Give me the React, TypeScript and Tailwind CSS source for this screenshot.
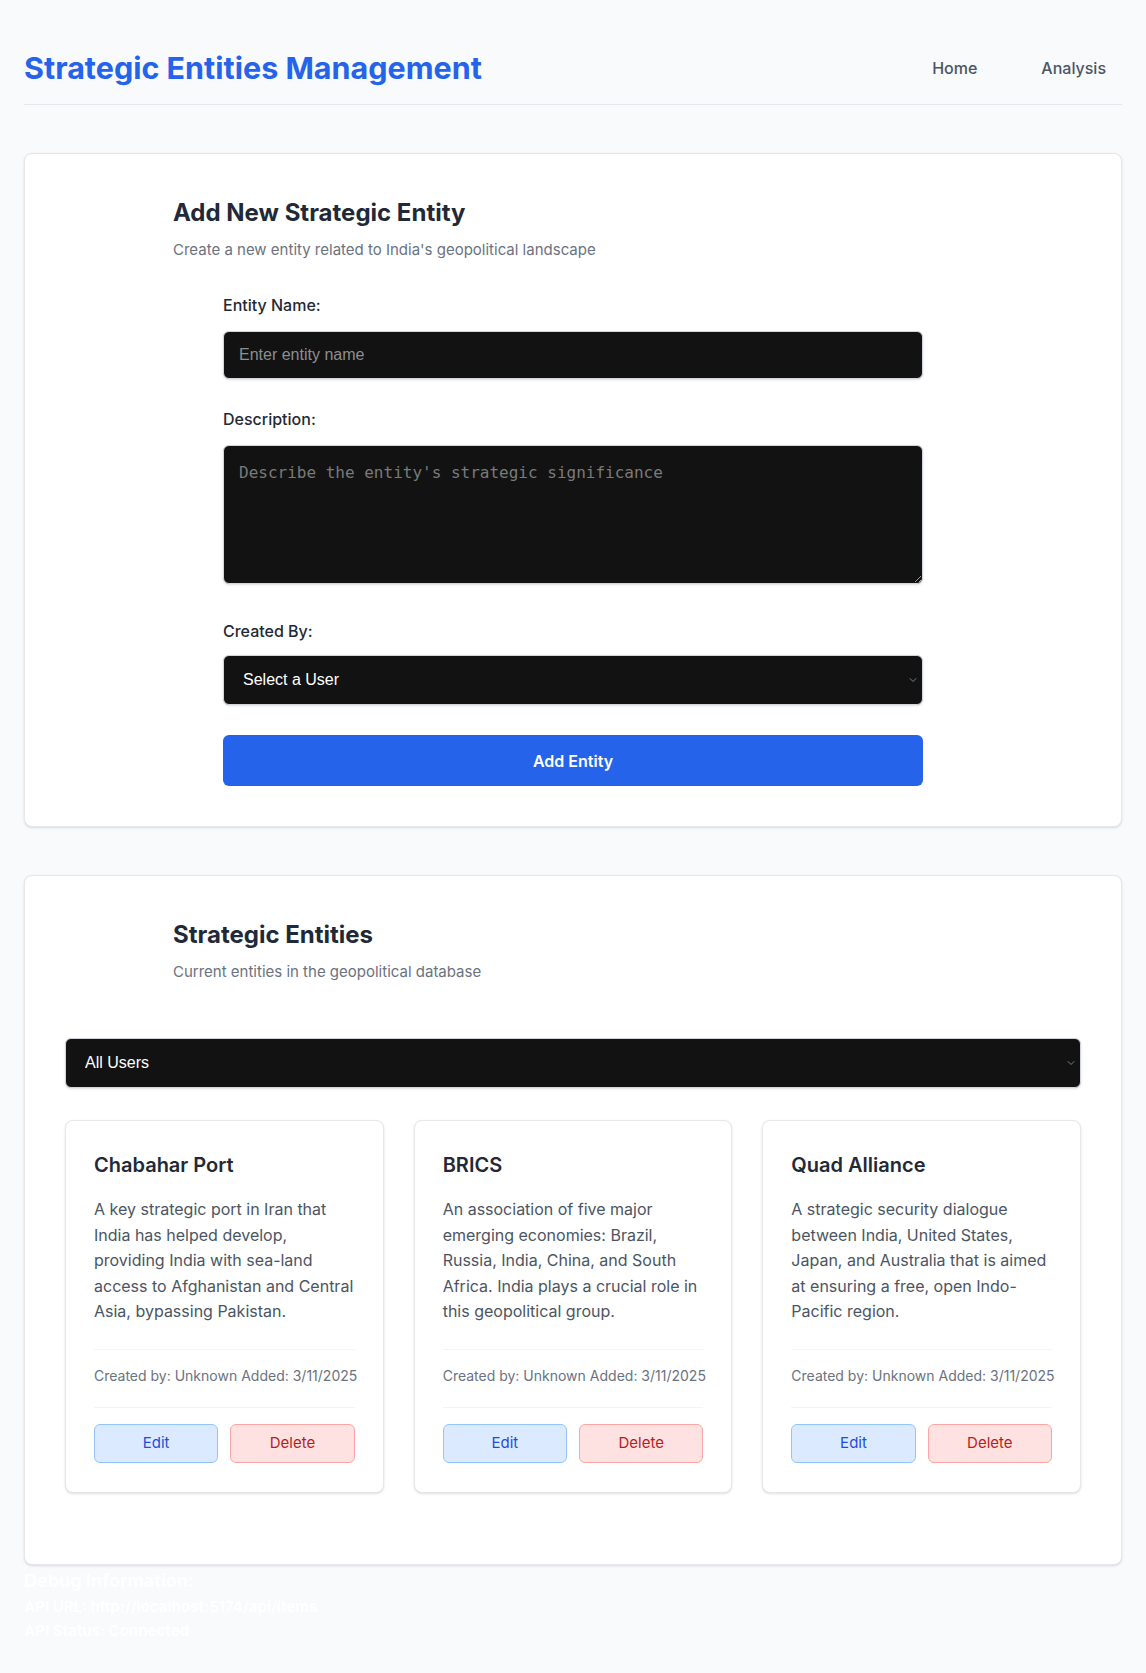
import { ChevronDown } from "lucide-react";

const entities = [
  {
    name: "Chabahar Port",
    desc: "A key strategic port in Iran that India has helped develop, providing India with sea-land access to Afghanistan and Central Asia, bypassing Pakistan.",
  },
  {
    name: "BRICS",
    desc: "An association of five major emerging economies: Brazil, Russia, India, China, and South Africa. India plays a crucial role in this geopolitical group.",
  },
  {
    name: "Quad Alliance",
    desc: "A strategic security dialogue between India, United States, Japan, and Australia that is aimed at ensuring a free, open Indo-Pacific region.",
  },
];

function SectionHead({ title, sub }: { title: string; sub: string }) {
  return (
    <div className="mx-auto mb-8 max-w-[800px]">
      <h2 className="text-2xl leading-[38px] font-bold text-[#1f2937]">{title}</h2>
      <p className="mt-[7px] text-[15px] leading-[22px] text-[#6b7280]">{sub}</p>
    </div>
  );
}

function DarkSelect({ label }: { label: string }) {
  return (
    <div className="relative">
      <select
        className="h-[50px] w-full appearance-none rounded-md border border-gray-300 bg-[#121212] pl-[19px] text-base text-white shadow-sm font-['Liberation_Sans',Arial,sans-serif]"
        defaultValue=""
      >
        <option value="">{label}</option>
      </select>
      <ChevronDown className="pointer-events-none absolute right-[4px] top-1/2 h-3 w-3 -translate-y-1/2 text-gray-400" strokeWidth={1.5} />
    </div>
  );
}

function EntityCard({ name, desc }: { name: string; desc: string }) {
  return (
    <div className="rounded-lg border border-gray-200 bg-white px-7 pt-7 pb-[29px] shadow-sm">
      <h3 className="mb-4 text-xl leading-8 font-semibold text-[#1f2937]">{name}</h3>
      <p className="mb-6 text-base leading-[25.6px] text-[#4b5563]">{desc}</p>
      <div className="flex justify-between gap-1 border-y border-gray-100 pt-4 pb-[21px] text-sm leading-5 whitespace-nowrap text-[#6b7280]">
        <span>Created by: Unknown</span>
        <span>Added: 3/11/2025</span>
      </div>
      <div className="mt-4 flex gap-3">
        <button className="h-[39px] flex-1 rounded-md border border-[#93c5fd] bg-[#dbeafe] text-[15px] text-[#1d4ed8]">Edit</button>
        <button className="h-[39px] flex-1 rounded-md border border-[#fca5a5] bg-[#fee2e2] text-[15px] text-[#b91c1c]">Delete</button>
      </div>
    </div>
  );
}

export default function App() {
  return (
    <div className="min-h-screen bg-[#f8fafc] px-6 pb-8 font-['Inter',sans-serif]">
      {/* HEADER */}
      <header className="flex items-center justify-between border-b border-gray-200 pt-[50px] pb-[18px]">
        <h1 className="text-[30.5px] leading-9 font-bold text-[#2563eb]">Strategic Entities Management</h1>
        <nav className="flex gap-8">
          <a className="px-4 text-base font-medium text-[#4b5563]">Home</a>
          <a className="px-4 text-base font-medium text-[#4b5563]">Analysis</a>
        </nav>
      </header>

      {/* ADD FORM */}
      <section className="mt-12 rounded-lg border border-gray-200 bg-white p-10 shadow-sm">
        <SectionHead title="Add New Strategic Entity" sub="Create a new entity related to India's geopolitical landscape" />
        <form className="mx-auto max-w-[700px]" onSubmit={(e) => e.preventDefault()}>
          <div className="mb-7">
            <label className="mb-3.5 block text-base leading-6 font-medium text-[#1f2937]">Entity Name:</label>
            <input
              className="block h-[48px] w-full rounded-md border border-gray-300 bg-[#121212] px-[15px] text-base text-white shadow-sm placeholder:text-[#8e8e8e] font-['Liberation_Sans',Arial,sans-serif]"
              placeholder="Enter entity name"
            />
          </div>
          <div className="mb-[35px]">
            <label className="mb-3.5 block text-base leading-6 font-medium text-[#1f2937]">Description:</label>
            <textarea
              className="block h-[139px] w-full rounded-md border border-gray-300 bg-[#121212] px-[15px] pt-[15px] pb-3 text-base text-white shadow-sm placeholder:text-[#7a7a7a] font-['DejaVu_Sans_Mono',monospace]"
              placeholder="Describe the entity's strategic significance"
            />
          </div>
          <div className="mb-[30px]">
            <label className="mb-3 block text-base leading-6 font-medium text-[#1f2937]">Created By:</label>
            <DarkSelect label="Select a User" />
          </div>
          <button className="h-[51px] w-full rounded-md bg-[#2563eb] text-base font-semibold text-white">Add Entity</button>
        </form>
      </section>

      {/* LIST */}
      <section className="mt-12 rounded-lg border border-gray-200 bg-white p-10 shadow-sm">
        <SectionHead title="Strategic Entities" sub="Current entities in the geopolitical database" />
        <div className="mt-[55px]">
          <DarkSelect label="All Users" />
        </div>
        <div className="mt-8 mb-[31px] grid grid-cols-3 gap-[30px]">
          {entities.map((e) => (
            <EntityCard key={e.name} name={e.name} desc={e.desc} />
          ))}
        </div>
      </section>

      {/* DEBUG */}
      <div className="mt-[2px] text-white">
        <h3 className="text-lg leading-7 font-bold">Debug Information:</h3>
        <p className="text-[15px] leading-6 font-bold">API URL: http://localhost:5174/api/items</p>
        <p className="text-[15px] leading-6 font-bold">API Status: Connected</p>
      </div>
    </div>
  );
}
